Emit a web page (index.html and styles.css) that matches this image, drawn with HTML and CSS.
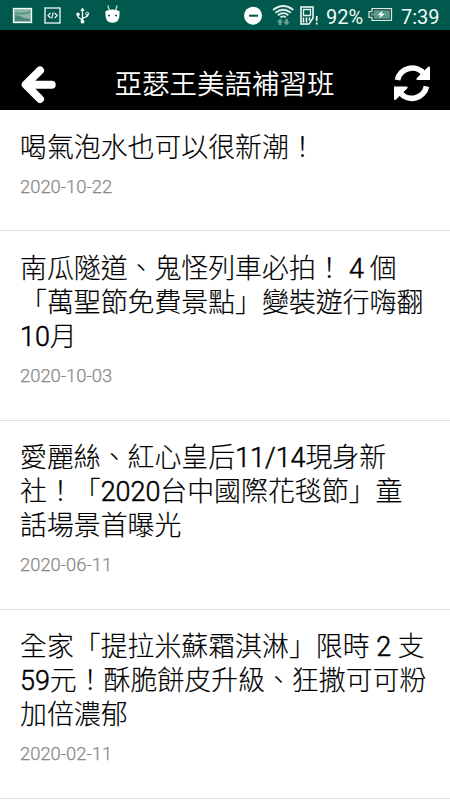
FILE: index.html
```html
<!DOCTYPE html>
<html lang="zh-Hant">
<head>
<meta charset="utf-8">
<title>亞瑟王美語補習班</title>
<link rel="stylesheet" href="styles.css">
</head>
<body>
<div class="status">
  <svg class="status-left" width="130" height="30" viewBox="0 0 130 30">
    <rect x="13.5" y="8.5" width="18" height="14" fill="#8bb5a9" stroke="#f4fffa" stroke-width="1.3"/>
    <path d="M15 12q8 2 15-1v2q-7 3-15 1z" fill="#5d978a"/>
    <path d="M15 15l5 1 4 2 6 1v2H15z" fill="#488879"/>
    <rect x="45" y="8" width="15" height="15" fill="none" stroke="#e2efeb" stroke-width="1.4"/>
    <path d="M50.500 13L48 15.500 50.500 18M54.700 13l2.500 2.500-2.500 2.500M53.300 12.500l-1.600 6" fill="none" stroke="#e9f4f0" stroke-width="1.200"/>
    <path d="M82.500 21V10M82.500 20l-4.500-3v-2.500M82.500 18.500l5-2.500v-2" fill="none" stroke="#fff" stroke-width="1.3"/>
    <path d="M80.300 11l2.200-3.500 2.200 3.500z" fill="#fff"/>
    <circle cx="82.500" cy="21.700" r="1.900" fill="#fff"/><circle cx="78" cy="14.300" r="1.700" fill="#fff"/>
    <circle cx="87.300" cy="13.800" r="1.500" fill="none" stroke="#fff"/>
    <path d="M105.500 11q7-3 14 0v4q0 7.800-7 7.800t-7-7.800z" fill="#fff"/>
    <path d="M109.300 10l-1.500-4.500M115.700 10l1.500-4.500" stroke="#c9ded7" stroke-width="1.3"/>
    <path d="M108 15.500h2M115 15.500h2" stroke="#17584b" stroke-width="1.3"/>
  </svg>
  <div class="status-right">
    <svg width="80" height="30" viewBox="242 0 80 30">
      <circle cx="253" cy="15.700" r="9" fill="#fff"/><path d="M249 15.700h9" stroke="#00594c" stroke-width="2"/>
      <g fill="none" stroke="#e0eeea" stroke-width="1.800"><path d="M273 10q10.200-8 20.400 0"/><path d="M275.500 12.700q7.700-6 15.400 0"/><path d="M278 15.300q5.200-4.400 10.400 0"/><path d="M280.500 17.300q2.700-2 5.400 0"/></g>
      <path d="M280 18.500l-3.300 3.700h2V25h2.700v-2.800h2zM286.500 25.500l-3.200-3.700h2V19h2.600v2.800h2z" fill="#67a296"/>
      <path d="M301 7h12v11l-4 6h-8z" fill="none" stroke="#fff" stroke-width="1.500"/>
      <path d="M303.500 9.500h7v6h-7z" fill="none" stroke="#e1eeea" stroke-width="1.300"/>
      <path d="M303.500 17.500v5M306.500 17.500v5M309.500 17.500v3" stroke="#fff" stroke-width="1.500"/>
      <path d="M316.700 16v5M316.700 22.500v2" stroke="#fff" stroke-width="1.700"/>
    </svg>
    <span class="percent">92%</span>
    <svg class="battery" width="26" height="16" viewBox="367 8 26 16">
      <path d="M372 9.500h19.500v12H372v-3h-3v-6h3z" fill="#5b9889" stroke="#dce8e4" stroke-width="1.200"/>
      <path d="M373.300 10.800h17v9.400h-17v-3h-3v-3.400h3z" fill="none" stroke="#063e34" stroke-width=".9"/>
      <path d="M382.500 11.500l-5 4.700h3.300l-1.500 3.300 5.500-4.700h-3.300z" fill="#fff"/>
    </svg>
    <span class="clock">7:39</span>
  </div>
</div>
<header class="bar">
  <svg class="back" width="35" height="38" viewBox="21 66 35 38"><path d="M40 70.400L25.700 84.700 40 99M27 84.700H51.700" fill="none" stroke="#fff" stroke-width="8" stroke-linecap="round" stroke-linejoin="round"/></svg>
  <h1 class="title">亞瑟王美語補習班</h1>
  <svg class="refresh" width="38" height="38" viewBox="393 65 38 38">
    <g id="half"><path d="M397.500 80A14.900 14.900 0 0 1 424 74" fill="none" stroke="#fff" stroke-width="5.700"/><path d="M428.200 66.700q1.800-.7 1.800 1.200V80h-12.500q-2-.3-.6-2z" fill="#fff"/></g>
    <use href="#half" transform="rotate(180 412 83.200)"/>
  </svg>
</header>
<main class="list">
  <article class="item"><h2 class="headline">喝氣泡水也可以很新潮！</h2><time class="date">2020-10-22</time></article>
  <article class="item"><h2 class="headline">南瓜隧道、鬼怪列車必拍！<span class="latin spaced"> 4 </span>個<br>「萬聖節免費景點」變裝遊行嗨翻<br><span class="latin">10</span>月</h2><time class="date">2020-10-03</time></article>
  <article class="item"><h2 class="headline">愛麗絲、紅心皇后<span class="latin">11/14</span>現身新<br>社！「<span class="latin">2020</span>台中國際花毯節」童<br>話場景首曝光</h2><time class="date">2020-06-11</time></article>
  <article class="item"><h2 class="headline">全家「提拉米蘇霜淇淋」限時<span class="latin"> 2 </span>支<br><span class="latin">59</span>元！酥脆餅皮升級、狂撒可可粉<br>加倍濃郁</h2><time class="date">2020-02-11</time></article>
</main>
</body>
</html>
```
FILE: styles.css
```css
* { box-sizing: border-box; }
body {
  margin: 0;
  height: 800px;
  overflow: hidden;
  background: #fff;
  font-family: Roboto, "Noto Sans CJK TC", sans-serif;
}
.status {
  display: flex;
  justify-content: space-between;
  height: 30px;
  background: #00594c;
  color: #f3faf8;
}
.status svg { display: block; flex: none; }
.status-right {
  display: flex;
  align-items: center;
  padding-right: 10px;
}
.percent, .clock {
  font-size: 20px;
  line-height: 30px;
  padding-top: 3px;
  white-space: nowrap;
}
.percent { width: 41px; margin-left: 4px; }
.battery { margin-right: 8px; }
.clock { width: 39px; }
.bar {
  display: flex;
  align-items: flex-start;
  justify-content: space-between;
  height: 80px;
  padding: 35px 19px 0 21px;
  background: #000;
}
.bar svg { display: block; }
.back { margin-top: 1px; }
.title {
  margin: 1px 0 0;
  color: #fff;
  font-size: 27.5px;
  font-weight: 350;
  line-height: 38px;
  white-space: nowrap;
}
.item {
  height: 189.2px;
  padding: 21.5px 18px 0 20px;
  border-bottom: 1px solid #dce1e5;
}
.item:first-child { height: 121.4px; }
.headline {
  margin: 0;
  color: #000;
  font-size: 26.9px;
  font-weight: 300;
  line-height: 33.9px;
  white-space: nowrap;
  -webkit-text-stroke: 0.15px #000;
}
.latin { -webkit-text-stroke: 0.5px #000; }
.spaced { letter-spacing: -0.3px; }
.date {
  display: block;
  margin-top: 10.5px;
  color: #888;
  font-size: 18.4px;
  font-weight: 350;
  line-height: 22px;
  -webkit-text-stroke: 0.25px #888;
}
```
